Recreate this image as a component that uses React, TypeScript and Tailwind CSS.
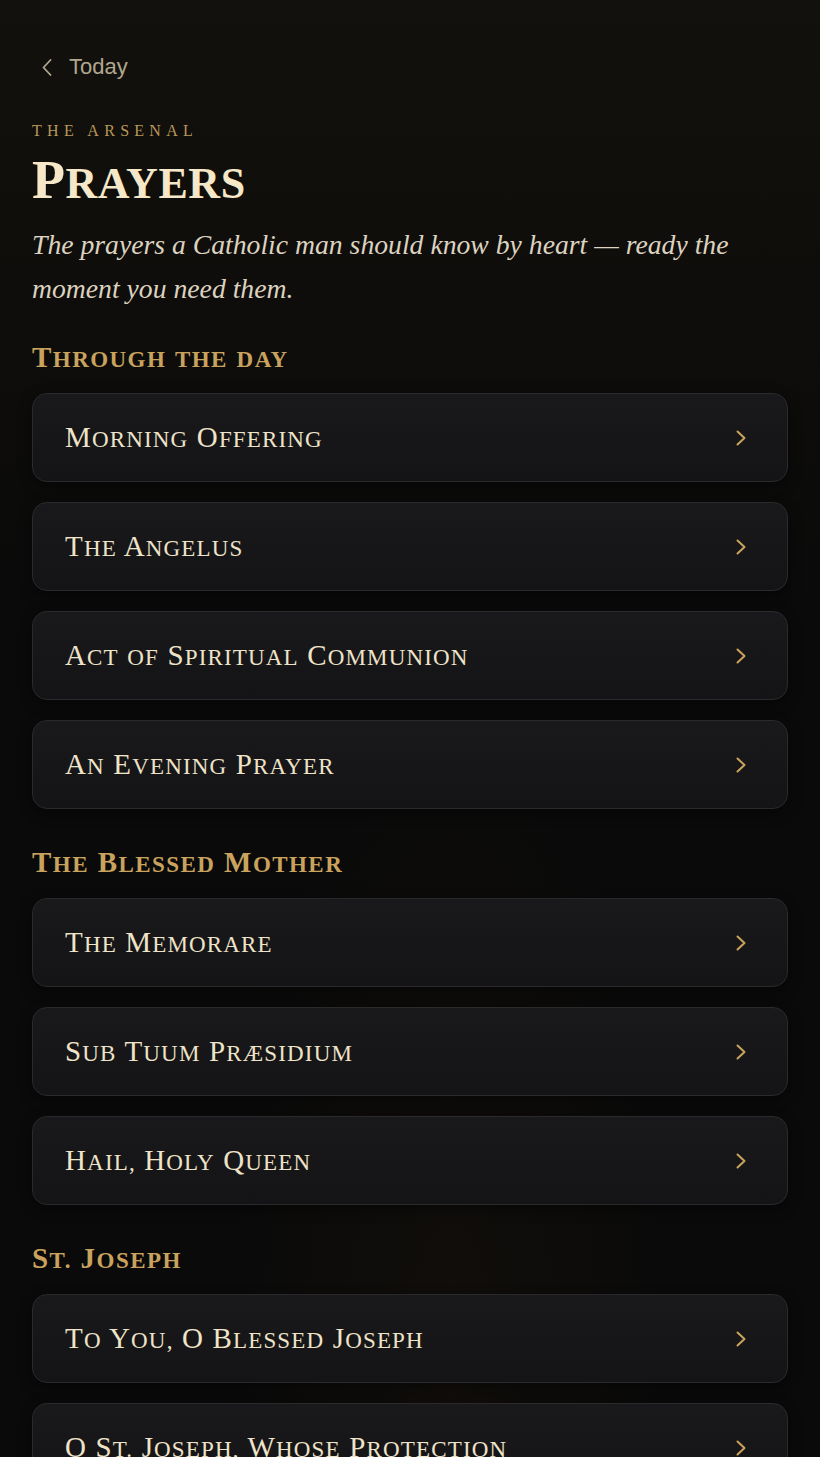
const sections = [
  {
    title: "Through the day",
    prayers: ["Morning Offering", "The Angelus", "Act of Spiritual Communion", "An Evening Prayer"],
  },
  {
    title: "The Blessed Mother",
    prayers: ["The Memorare", "Sub Tuum Præsidium", "Hail, Holy Queen"],
  },
  {
    title: "St. Joseph",
    prayers: ["To You, O Blessed Joseph", "O St. Joseph, Whose Protection"],
  },
]

// Cinzel-style caps: keep real capitals big, lowercase drawn as slightly smaller capitals
function SmallCaps({ text, small }: { text: string; small: string }) {
  const parts = text.split(/([a-zæ.,]+)/)
  return (
    <>
      {parts.map((part, i) =>
        /^[a-zæ.,]+$/.test(part) ? (
          <span key={i} className={`uppercase ${small}`}>
            {part}
          </span>
        ) : (
          <span key={i}>{part}</span>
        )
      )}
    </>
  )
}

function Chevron() {
  return (
    <svg width="10" height="16" viewBox="0 0 10 16" fill="none" className="shrink-0">
      <path d="M1.5 1.5 L8.5 8 L1.5 14.5" stroke="#caa45a" strokeWidth="2" strokeLinecap="round" strokeLinejoin="round" />
    </svg>
  )
}

function PrayerCard({ name }: { name: string }) {
  return (
    <div className="flex h-[89px] items-center justify-between rounded-[15px] border border-[#2a2a2d] bg-gradient-to-b from-[#19191c] to-[#141417] pl-[32px] pr-[41px] shadow-[0_4px_14px_rgba(0,0,0,0.45)]">
      <span className="font-['Liberation_Serif',serif] text-[29px] leading-none tracking-[0.04em] text-[#efe3c8]">
        <SmallCaps text={name} small="text-[23px]" />
      </span>
      <Chevron />
    </div>
  )
}

export default function App() {
  return (
    <div className="min-h-[1457px] w-full bg-[#0a0a0a] bg-[radial-gradient(ellipse_at_55%_88%,#110e0b_0%,transparent_35%),linear-gradient(180deg,#13110d_0%,#0e0d0b_20%,#0a0a0a_40%,#0a0a0a_100%)]">
      <div className="px-[32px] pt-[50px]">
        {/* back link */}
        <div className="flex h-[34px] items-center gap-[17px] pl-[10px] text-[#b1a78f]">
          <svg width="10" height="17" viewBox="0 0 10 17" fill="none">
            <path d="M8.5 1 L1.5 8.5 L8.5 16" stroke="currentColor" strokeWidth="1.8" strokeLinecap="round" strokeLinejoin="round" />
          </svg>
          <span className="font-['Liberation_Sans',sans-serif] text-[22px] leading-none">Today</span>
        </div>

        <div className="mt-[37px] font-['Liberation_Serif',serif] text-[16px] leading-[20px] tracking-[0.33em] text-[#b89858]">
          THE ARSENAL
        </div>

        <h1 className="mt-[9px] h-[60px] font-['Liberation_Serif',serif] text-[54px] font-bold leading-[60px] tracking-[0.01em] text-[#f5e7c7]">
          <SmallCaps text="Prayers" small="text-[44px]" />
        </h1>

        <p className="mt-[13px] font-['Liberation_Serif',serif] text-[27.7px] italic leading-[44px] text-[#dcd2bf]">
          The prayers a Catholic man should know by heart — ready the moment you need them.
        </p>

        {sections.map((section, i) => (
          <section key={section.title} className={i === 0 ? "mt-[28px]" : "mt-[35px]"}>
            <h2 className="mb-[18px] h-[36px] font-['Liberation_Serif',serif] text-[29px] font-bold leading-[36px] tracking-[0.05em] text-[#c9a35e]">
              <SmallCaps text={section.title} small="text-[23px]" />
            </h2>
            <div className="flex flex-col gap-[20px]">
              {section.prayers.map((p) => (
                <PrayerCard key={p} name={p} />
              ))}
            </div>
          </section>
        ))}
        <div className="h-[40px]" />
      </div>
    </div>
  )
}
